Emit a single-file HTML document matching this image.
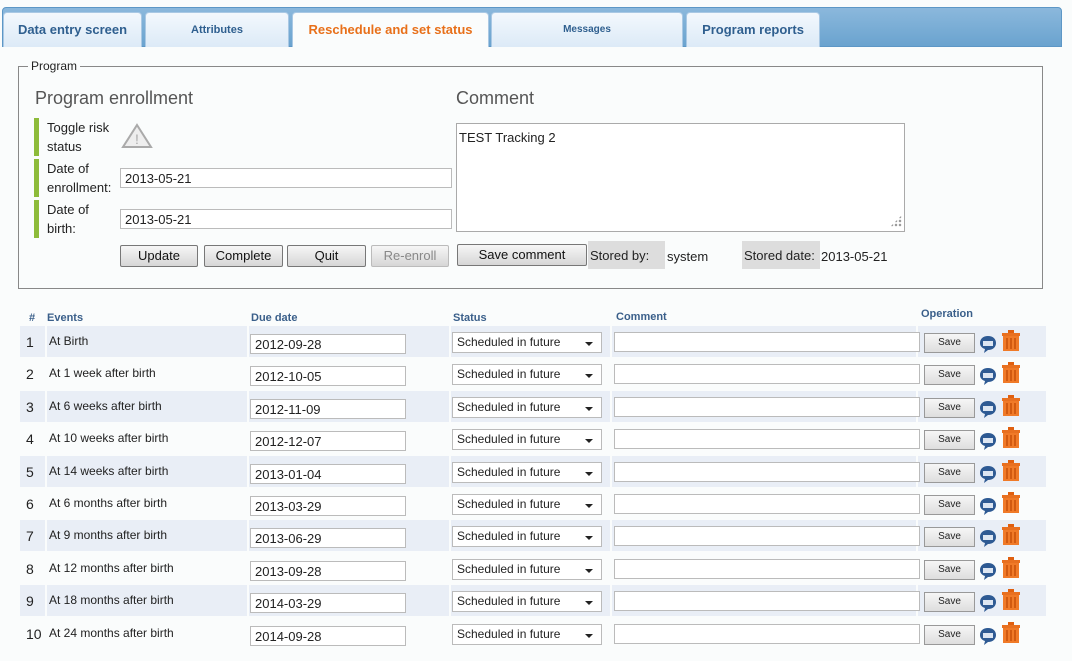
<!DOCTYPE html><html><head><style>
body{margin:0;width:1072px;height:661px;background:#fafcfc;font-family:"Liberation Sans",sans-serif;font-size:13px;color:#222;position:relative;overflow:hidden}
.a{position:absolute}
.tabbar{left:2px;top:7px;width:1058px;height:38px;border-radius:4px 4px 0 0;background:linear-gradient(#8bb8dc,#6aa3cf);border:1px solid #5d97c6}
.tab{top:12px;height:34px;background:linear-gradient(#f3f8fd,#dceaf7);border:1px solid #a9c8e4;border-bottom:none;border-radius:4px 4px 0 0;text-align:center;line-height:34px;font-weight:bold;color:#2f5f8f}
.btn{height:20px;border:1px solid #777;border-radius:2px;background:linear-gradient(#f6f6f6,#d6d6d6);text-align:center;line-height:20px;font-size:13px;color:#111}
.inp{background:#fff;border:1px solid #bbb;height:20px;line-height:20px;padding-left:4px;box-sizing:border-box;font-size:13px}
.lab{border-left:5px solid #8dbb3a;padding-left:8px;line-height:19px}
.th{font-weight:bold;font-size:11px;color:#3a5f8a}
.sel{background:#fff;border:1px solid #bbb;height:21px;line-height:19px;padding-left:4px;box-sizing:border-box;font-size:12px;width:150px}
.sel:after{content:"";position:absolute;right:8px;top:9px;border:4px solid transparent;border-top:4px solid #222}
.sv{width:49px;height:18px;border:1px solid #999;background:linear-gradient(#f6f6f6,#dedede);font-size:10px;text-align:center;line-height:18px}
</style></head><body>
<div class="a tabbar"></div>
<div class="a tab" style="left:3px;width:137px">Data entry screen</div>
<div class="a tab" style="left:145px;width:142px;font-size:11px">Attributes</div>
<div class="a tab" style="left:292px;width:195px;background:#fafcfc;color:#e8701a">Reschedule and set status</div>
<div class="a tab" style="left:491px;width:190px;font-size:10px">Messages</div>
<div class="a tab" style="left:686px;width:132px">Program reports</div>

<div class="a" style="left:18px;top:66px;width:1023px;height:221px;border:1px solid #888"></div>
<div class="a" style="left:28px;top:59px;background:#fafcfc;padding:0 3px;font-size:12px">Program</div>
<div class="a" style="left:35px;top:88px;font-size:18px;color:#555">Program enrollment</div>
<div class="a" style="left:456px;top:88px;font-size:18px;color:#555">Comment</div>
<div class="a lab" style="left:34px;top:118px;height:38px">Toggle risk<br>status</div>
<svg class="a" style="left:121px;top:123px" width="32" height="26"><path d="M16 2 L30 24 H2 Z" fill="#eee" stroke="#aaa" stroke-width="2"/><text x="16" y="21" font-size="14" text-anchor="middle" fill="#aaa" font-family="Liberation Sans">!</text></svg>
<div class="a lab" style="left:34px;top:159px;height:38px">Date of<br>enrollment:</div>
<div class="a inp" style="left:120px;top:168px;width:332px">2013-05-21</div>
<div class="a lab" style="left:34px;top:200px;height:38px">Date of<br>birth:</div>
<div class="a inp" style="left:120px;top:209px;width:332px">2013-05-21</div>
<div class="a" style="left:456px;top:123px;width:449px;height:109px;background:#fff;border:1px solid #aaa;box-sizing:border-box;padding:6px 2px">TEST Tracking 2</div>
<div class="a" style="left:890px;top:215px;width:12px;height:12px;background:radial-gradient(#999 1px,transparent 1.5px) 0 0/4px 4px;clip-path:polygon(100% 0,100% 100%,0 100%)"></div>
<div class="a btn" style="left:120px;top:245px;width:76px">Update</div>
<div class="a btn" style="left:204px;top:245px;width:77px">Complete</div>
<div class="a btn" style="left:287px;top:245px;width:77px">Quit</div>
<div class="a btn" style="left:371px;top:245px;width:76px;color:#888;border-color:#bbb">Re-enroll</div>
<div class="a btn" style="left:457px;top:244px;width:128px">Save comment</div>
<div class="a" style="left:588px;top:241px;width:75px;height:28px;background:#ddd;line-height:29px;padding-left:2px">Stored by:</div>
<div class="a" style="left:667px;top:249px">system</div>
<div class="a" style="left:742px;top:241px;width:76px;height:28px;background:#ddd;line-height:29px;padding-left:2px">Stored date:</div>
<div class="a" style="left:821px;top:249px">2013-05-21</div>

<div class="a th" style="left:29px;top:312px">#</div>
<div class="a th" style="left:47px;top:312px">Events</div>
<div class="a th" style="left:251px;top:312px">Due date</div>
<div class="a th" style="left:453px;top:312px">Status</div>
<div class="a th" style="left:616px;top:311px">Comment</div>
<div class="a th" style="left:921px;top:308px">Operation</div>

<div id="rows"></div>
<script>
var ev=["At Birth","At 1 week after birth","At 6 weeks after birth","At 10 weeks after birth","At 14 weeks after birth","At 6 months after birth","At 9 months after birth","At 12 months after birth","At 18 months after birth","At 24 months after birth"];
var dt=["2012-09-28","2012-10-05","2012-11-09","2012-12-07","2013-01-04","2013-03-29","2013-06-29","2013-09-28","2014-03-29","2014-09-28"];
var h="";
for(var i=0;i<10;i++){var y=Math.round(326+i*32.4);var bg=i%2==0?"#e9eef6":"#fafcfc";
h+='<div class="a" style="left:20px;top:'+y+'px;width:1026px;height:31px;background:'+bg+'"></div>';
[45,247,449,610,916].forEach(function(x){h+='<div class="a" style="left:'+x+'px;top:'+y+'px;width:2px;height:31px;background:#fafcfc"></div>'});
h+='<div class="a" style="left:26px;top:'+(y+8)+'px;font-size:14px">'+(i+1)+'</div>';
h+='<div class="a" style="left:49px;top:'+(y+8)+'px;font-size:12px">'+ev[i]+'</div>';
h+='<div class="a inp" style="left:250px;top:'+(y+8)+'px;width:156px">'+dt[i]+'</div>';
h+='<div class="a sel" style="left:452px;top:'+(y+6)+'px">Scheduled in future</div>';
h+='<div class="a inp" style="left:614px;top:'+(y+6)+'px;width:306px"></div>';
h+='<div class="a sv" style="left:924px;top:'+(y+7)+'px">Save</div>';
h+='<svg class="a" style="left:978px;top:'+(y+8)+'px" width="20" height="20"><path d="M10 2 C15 2 18 5 18 9 C18 13 15 16 10 16 L6 19 L7 15 C4 14 2 12 2 9 C2 5 5 2 10 2Z" fill="#2e5a93"/><rect x="5" y="7" width="10" height="5" fill="#dde6f2"/></svg>';
h+='<svg class="a" style="left:1001px;top:'+(y+4)+'px" width="20" height="22"><rect x="7" y="0" width="6" height="3" fill="#e06010"/><rect x="1" y="3" width="18" height="3" fill="#e87020"/><rect x="2" y="6" width="16" height="15" fill="#f07a28"/><path d="M6 8V19M10 8V19M14 8V19" stroke="#c85008" stroke-width="1.5"/></svg>';}
document.getElementById("rows").innerHTML=h;
</script>
</body></html>
